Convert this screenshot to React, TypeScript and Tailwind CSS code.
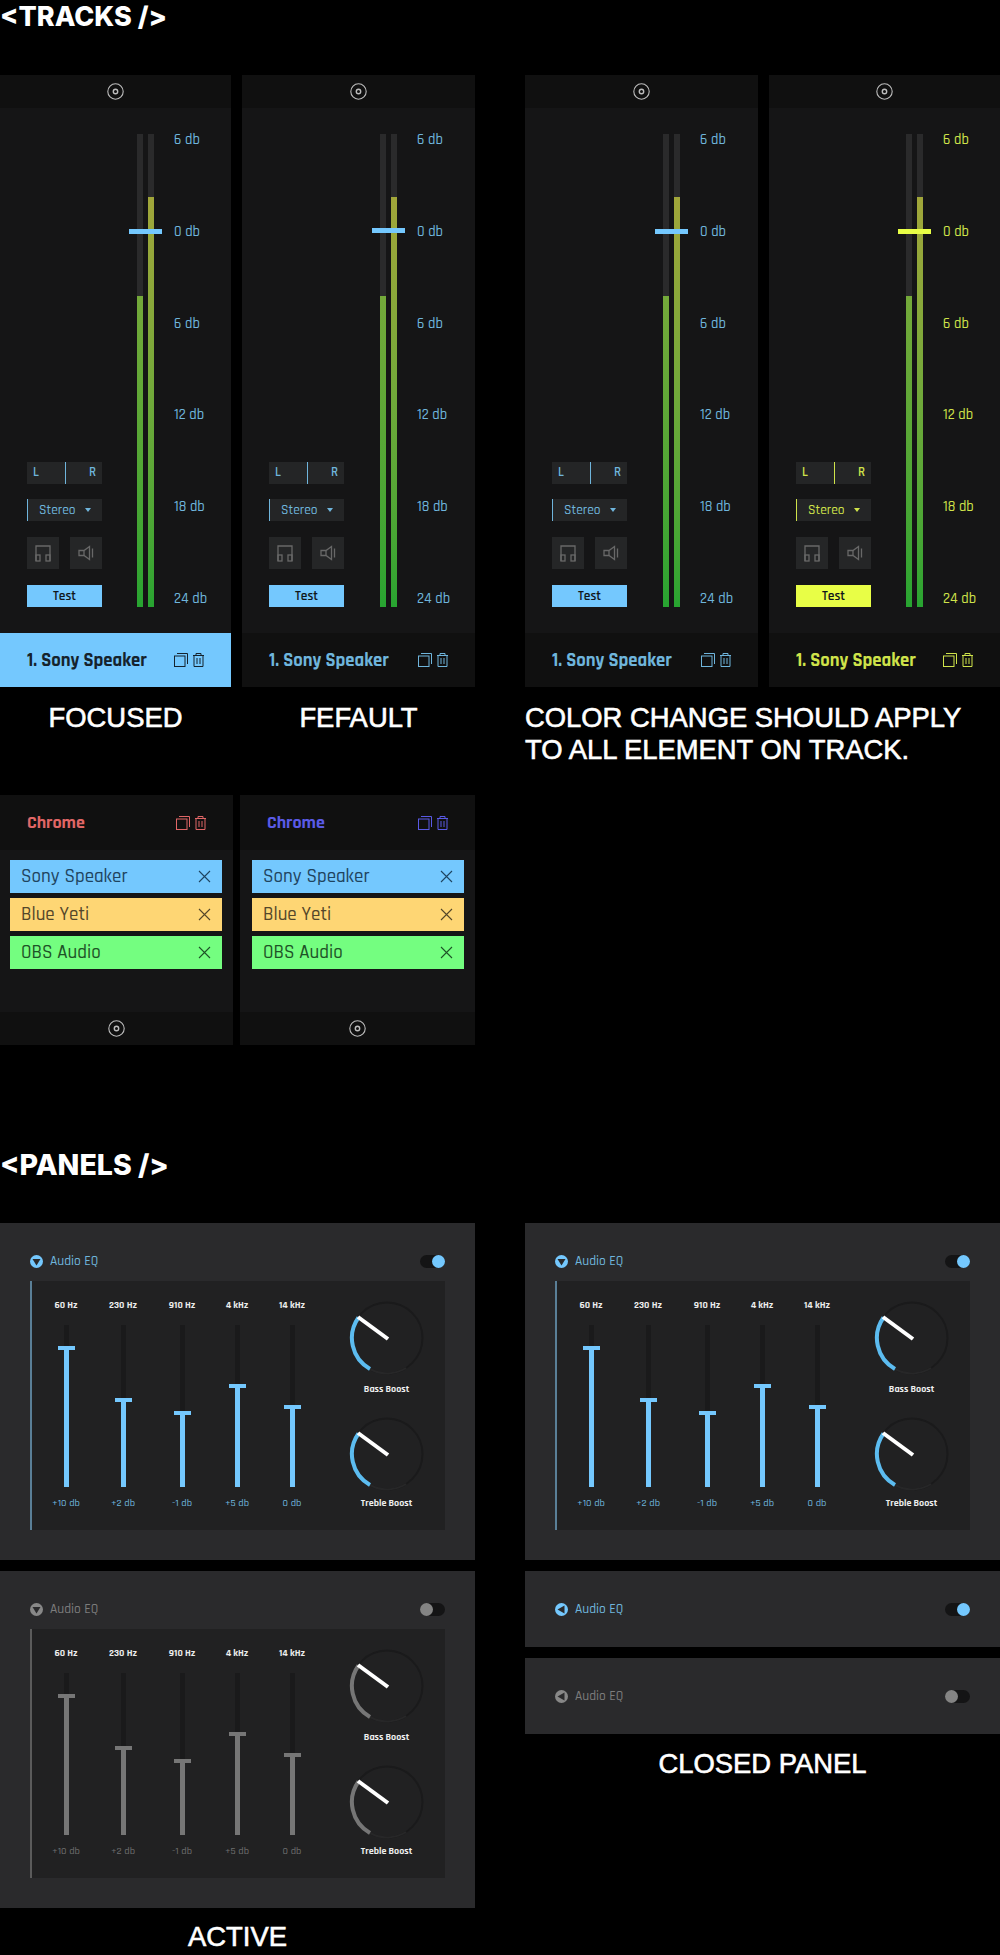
import React from 'react';

const font = 'font-["Rajdhani","Roboto","Liberation_Sans",sans-serif]';

const labels = ['6 db', '0 db', '6 db', '12 db', '18 db', '24 db'];

const CopyTrash = ({ className }: { className: string }) => (
  <svg width="30" height="14" viewBox="0 0 30 14" fill="none" stroke="currentColor" strokeWidth="1" className={className}>
    <rect x="0.5" y="3" width="10.5" height="10.5" />
    <path d="M3 0.5h10.5V11" />
    <path d="M19 2.5h11M22 2.5V0.5h5v2M20 2.5h9v11h-9zM23 5v6M26 5v6" />
  </svg>
);

const Target = () => (
  <svg width="17" height="17" viewBox="0 0 17 17" fill="none" stroke="#bdbdbd">
    <circle cx="8.5" cy="8.5" r="7.7" strokeWidth="1.1" />
    <circle cx="8.5" cy="8.5" r="2.2" strokeWidth="1.4" />
  </svg>
);

const Headphones = () => (
  <svg width="16" height="17" viewBox="0 0 16 17" fill="none" stroke="#686868" strokeWidth="1.3">
    <path d="M1 16V1h14v15" />
    <rect x="1" y="10" width="4" height="6" />
    <rect x="11" y="10" width="4" height="6" />
  </svg>
);

const Speaker = () => (
  <svg width="16" height="16" viewBox="0 0 16 16" fill="none" stroke="#686868" strokeWidth="1.3">
    <path d="M1 5.5h5L11.5 1.5v13L6 10.5H1z" />
    <path d="M6 6v4M14.5 3.5v9" />
  </svg>
);

type TrackProps = {
  width: string;
  gap: string;
  accent: string;
  thumb: string;
  lineBg: string;
  testBg: string;
  focused?: boolean;
  thumbTop: string;
};

const Track = ({ width, gap, accent, thumb, lineBg, testBg, focused, thumbTop }: TrackProps) => (
  <div className={`${width} flex h-[612px] flex-col bg-[#151516]`}>
    <div className="flex h-[33px] items-center justify-center bg-[#101010]">
      <Target />
    </div>
    <div className="flex h-[525px] py-[26px] pl-[27px]">
      <div className="flex w-[75px] flex-col justify-end">
        <div className={`relative flex h-[22px] items-center justify-between bg-[#242526] px-[6px] text-[13px] font-semibold ${accent}`}>
          <span>L</span>
          <span className={`absolute left-[38px] top-0 h-full w-[1px] ${lineBg}`} />
          <span>R</span>
        </div>
        <div className={`mt-[15px] flex h-[22px] items-center bg-[#242526] text-[13.5px] font-medium ${accent}`}>
          <span className={`h-full w-[1px] ${lineBg}`} />
          <span className="ml-[11px]">Stereo</span>
          <span className="ml-[9px] h-0 w-0 border-x-[3px] border-t-[4px] border-x-transparent border-t-current" />
        </div>
        <div className="mt-[16px] flex justify-between">
          <div className="flex h-[32px] w-[32px] items-center justify-center bg-[#252627]">
            <Headphones />
          </div>
          <div className="flex h-[32px] w-[32px] items-center justify-center bg-[#252627]">
            <Speaker />
          </div>
        </div>
        <div className={`mt-[16px] flex h-[22px] items-center justify-center text-[13.5px] font-semibold text-[#10161b] ${testBg}`}>
          Test
        </div>
      </div>
      <div className={`relative ${gap} flex w-[17px] justify-between`}>
        <div className="flex w-[6px] flex-col justify-end bg-[#2a2a2b]">
          <div className="h-[311px] bg-gradient-to-b from-[#74a93a] to-[#27a431]" />
        </div>
        <div className="flex w-[6px] flex-col justify-end bg-[#2a2a2b]">
          <div className="h-[410px] bg-gradient-to-b from-[#a1a63a] via-[#6fa93a] to-[#27a431]" />
        </div>
        <div className={`absolute left-[-8px] h-[5px] w-[33px] ${thumbTop} ${thumb}`} />
      </div>
      <div className={`-mt-[2px] ml-[20px] flex flex-col justify-between text-[14.5px] font-medium leading-[16px] ${accent}`}>
        {labels.map((l, i) => (
          <span key={i}>{l}</span>
        ))}
      </div>
    </div>
    <div className={`flex h-[54px] items-center justify-between px-[27px] ${focused ? 'bg-[#74c8fe] text-[#15232d]' : `bg-[#101010] ${accent}`}`}>
      <span className="pt-[3px] text-[18.7px] font-bold">1. Sony Speaker</span>
      <CopyTrash className={focused ? 'text-[#15232d]' : accent} />
    </div>
  </div>
);

const items = [
  { name: 'Sony Speaker', bg: 'bg-[#74c8fe]', text: 'text-[#1f4460]' },
  { name: 'Blue Yeti', bg: 'bg-[#fed674]', text: 'text-[#54472a]' },
  { name: 'OBS Audio', bg: 'bg-[#74fe80]', text: 'text-[#1e5327]' },
];

const Mixer = ({ width, pad, color }: { width: string; pad: string; color: string }) => (
  <div className={`${width} flex h-[250px] flex-col bg-[#151516]`}>
    <div className={`flex h-[55px] items-center justify-between bg-[#101010] px-[27px] ${color}`}>
      <span className="text-[18px] font-bold">Chrome</span>
      <CopyTrash className={color} />
    </div>
    <div className={`flex flex-1 flex-col gap-[5px] pt-[10px] ${pad}`}>
      {items.map((it) => (
        <div key={it.name} className={`flex h-[33px] items-center justify-between pl-[11px] pr-[11px] text-[19px] font-medium ${it.bg} ${it.text}`}>
          <span className="pt-[1px]">{it.name}</span>
          <svg width="13" height="13" viewBox="0 0 13 13" stroke="currentColor" strokeWidth="1.1">
            <path d="M1 1l11 11M12 1L1 12" />
          </svg>
        </div>
      ))}
    </div>
    <div className="flex h-[33px] items-center justify-center bg-[#101010]">
      <Target />
    </div>
  </div>
);

const bands = [
  { freq: '60 Hz', db: '+10 db', h: 'h-[141px]', ml: 'ml-[7px]' },
  { freq: '230 Hz', db: '+2 db', h: 'h-[89px]', ml: 'ml-[3px]' },
  { freq: '910 Hz', db: '-1 db', h: 'h-[76px]', ml: 'ml-[5px]' },
  { freq: '4 kHz', db: '+5 db', h: 'h-[103px]', ml: 'ml-[1px]' },
  { freq: '14 kHz', db: '0 db', h: 'h-[82px]', ml: 'ml-[1px]' },
];

const Knob = ({ stroke }: { stroke: string }) => (
  <svg width="76" height="76" viewBox="0 0 76 76" fill="none">
    <circle cx="38" cy="38" r="35.5" stroke="#1a1a1b" strokeWidth="2" />
    <path d="M21 69A35.5 35.5 0 0 0 57 68" stroke="#272728" strokeWidth="2" />
    <path d="M9.5 17.5A35.5 35.5 0 0 0 21 69" stroke={stroke} strokeWidth="4" />
    <path d="M9 17L39 39" stroke="#ffffff" strokeWidth="4" />
  </svg>
);

const PanelHead = ({ active, closed }: { active: boolean; closed?: boolean }) => (
  <>
    <div className={`flex items-center gap-[7px] text-[13.5px] font-medium ${active ? 'text-[#6fb5dc]' : 'text-[#7c7c7c]'}`}>
      <svg width="13" height="13" viewBox="0 0 13 13">
        <circle cx="6.5" cy="6.5" r="6.5" fill={active ? '#74c8fe' : '#888888'} />
        {closed ? <path d="M2.5 6.5L9.5 2.5v8z" fill="#2a2a2c" /> : <path d="M2.5 4h8L6.5 10.5z" fill="#2a2a2c" />}
      </svg>
      <span>Audio EQ</span>
    </div>
    <div className={`flex h-[13px] w-[25px] rounded-full bg-[#141415] ${active ? 'justify-end' : 'justify-start'}`}>
      <span className={`h-[13px] w-[13px] rounded-full ${active ? 'bg-[#74c8fe]' : 'bg-[#848484]'}`} />
    </div>
  </>
);

const Panel = ({ active }: { active: boolean }) => (
  <div className="h-[337px] w-[475px] bg-[#2a2a2c]">
    <div className="flex h-[58px] items-center justify-between px-[30px] pt-[19px]">
      <PanelHead active={active} />
    </div>
    <div className={`mx-[30px] flex h-[249px] w-[415px] border-l-2 bg-[#212122] ${active ? 'border-[#5a7f97]' : 'border-[#5b5b5b]'}`}>
      <div className="flex w-[305px] pt-[16px]">
        {bands.map((b) => (
          <div key={b.freq} className={`flex w-[54px] flex-col items-center ${b.ml}`}>
            <span className="text-[10px] font-bold leading-[16px] text-[#ededed]">{b.freq}</span>
            <div className="relative mt-[12px] flex h-[162px] w-[5px] flex-col justify-end bg-[#1a1a1b]">
              <div className={`relative w-[5px] ${b.h} ${active ? 'bg-[#74c8fe]' : 'bg-[#767676]'}`}>
                <div className={`absolute left-[-6px] top-0 h-[4px] w-[17px] ${active ? 'bg-[#74c8fe]' : 'bg-[#767676]'}`} />
              </div>
            </div>
            <span className={`mt-[8px] text-[10.5px] font-medium leading-[16px] ${active ? 'text-[#6fb5dc]' : 'text-[#6e6e6e]'}`}>{b.db}</span>
          </div>
        ))}
      </div>
      <div className="flex w-[99px] flex-col items-center pt-[19px]">
        <Knob stroke={active ? '#5cbcf0' : '#767676'} />
        <span className="mt-[6px] text-[10px] font-bold leading-[14px] text-[#ededed]">Bass Boost</span>
        <div className="mt-[20px]">
          <Knob stroke={active ? '#5cbcf0' : '#767676'} />
        </div>
        <span className="mt-[4px] text-[10px] font-bold leading-[14px] text-[#ededed]">Treble Boost</span>
      </div>
    </div>
  </div>
);

const Caption = ({ children, className }: { children: React.ReactNode; className?: string }) => (
  <div className={`font-["Liberation_Sans",sans-serif] text-[27.4px] leading-[32px] text-white [-webkit-text-stroke:0.6px_white] ${className ?? ''}`}>{children}</div>
);

const Heading = ({ children, className }: { children: React.ReactNode; className: string }) => (
  <h1 className={`font-["Inter",sans-serif] font-extrabold leading-[32px] text-white ${className}`}>{children}</h1>
);

export default function App() {
  return (
    <div className={`h-[1955px] w-[1000px] overflow-hidden bg-black pt-[1px] ${font}`}>
      <Heading className="text-[27px]">&lt;TRACKS /&gt;</Heading>
      <div className="mt-[42px] flex">
        <div className="flex w-[475px] justify-between">
          <Track width="w-[231px]" gap="ml-[35px]" accent="text-[#6fb5dc]" thumb="bg-[#74c8fe]" lineBg="bg-[#6fb5dc]" testBg="bg-[#74c8fe]" focused thumbTop="top-[95px]" />
          <Track width="w-[233px]" gap="ml-[36px]" accent="text-[#6fb5dc]" thumb="bg-[#74c8fe]" lineBg="bg-[#6fb5dc]" testBg="bg-[#74c8fe]" thumbTop="top-[94px]" />
        </div>
        <div className="ml-[50px] flex w-[475px] justify-between">
          <Track width="w-[233px]" gap="ml-[36px]" accent="text-[#6fb5dc]" thumb="bg-[#74c8fe]" lineBg="bg-[#6fb5dc]" testBg="bg-[#74c8fe]" thumbTop="top-[95px]" />
          <Track width="w-[231px]" gap="ml-[35px]" accent="text-[#cfe34a]" thumb="bg-[#e8fe46]" lineBg="bg-[#cfe34a]" testBg="bg-[#e8fe46]" thumbTop="top-[95px]" />
        </div>
      </div>
      <div className="mt-[15px] flex">
        <Caption className="w-[231px] text-center">FOCUSED</Caption>
        <Caption className="ml-[11px] w-[233px] text-center">FEFAULT</Caption>
        <Caption className="ml-[50px]">COLOR CHANGE SHOULD APPLY<br />TO ALL ELEMENT ON TRACK.</Caption>
      </div>
      <div className="mt-[29px] flex w-[475px] justify-between">
        <Mixer width="w-[233px]" pad="pl-[10px] pr-[11px]" color="text-[#e06666]" />
        <Mixer width="w-[235px]" pad="pl-[12px] pr-[11px]" color="text-[#5a5ae6]" />
      </div>
      <div className="mt-[104px]">
        <Heading className="text-[28.5px]">&lt;PANELS /&gt;</Heading>
      </div>
      <div className="mt-[42px] flex">
        <div className="flex w-[475px] flex-col gap-[11px]">
          <Panel active />
          <Panel active={false} />
          <Caption className="mt-[2px] text-center">ACTIVE</Caption>
        </div>
        <div className="ml-[50px] flex w-[475px] flex-col gap-[11px]">
          <Panel active />
          <div className="flex h-[76px] items-center justify-between bg-[#2a2a2c] px-[30px]">
            <PanelHead active closed />
          </div>
          <div className="flex h-[76px] items-center justify-between bg-[#2a2a2c] px-[30px]">
            <PanelHead active={false} closed />
          </div>
          <Caption className="mt-[3px] text-center">CLOSED PANEL</Caption>
        </div>
      </div>
    </div>
  );
}
